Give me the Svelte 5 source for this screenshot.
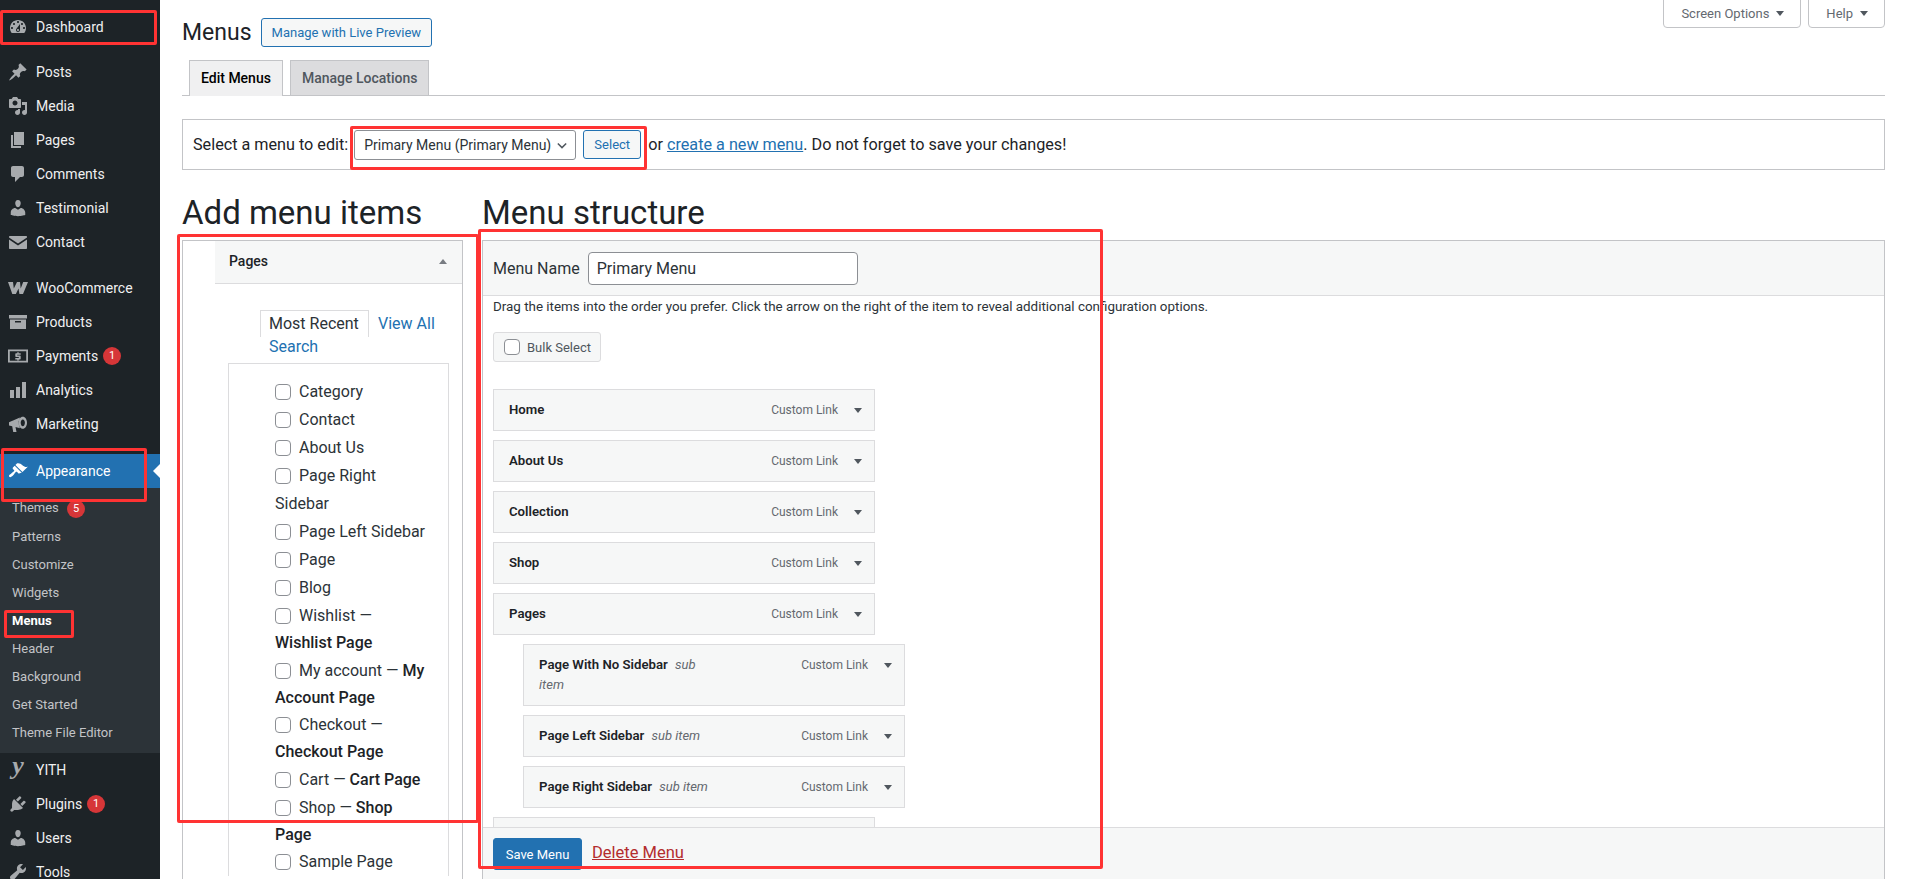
<script>
  const icons = {
    dashboard: "M3.76 16h12.48c1.1-1.37 1.76-3.11 1.76-5 0-4.42-3.58-8-8-8s-8 3.58-8 8c0 1.89.66 3.63 1.76 5zM10 4c.55 0 1 .45 1 1s-.45 1-1 1-1-.45-1-1 .45-1 1-1zM6 6c.55 0 1 .45 1 1s-.45 1-1 1-1-.45-1-1 .45-1 1-1zm8 0c.55 0 1 .45 1 1s-.45 1-1 1-1-.45-1-1 .45-1 1-1zm-5.37 5.55L12 7v6c0 1.1-.9 2-2 2s-2-.9-2-2c0-.57.24-1.08.63-1.45zM4 10c.55 0 1 .45 1 1s-.45 1-1 1-1-.45-1-1 .45-1 1-1zm12 0c.55 0 1 .45 1 1s-.45 1-1 1-1-.45-1-1 .45-1 1-1zm-5 3c0-.55-.45-1-1-1s-1 .45-1 1 .45 1 1 1 1-.45 1-1z",
    post: "M10.44 3.02l1.82-1.82 6.36 6.35-1.83 1.82c-1.05-.68-2.48-.57-3.41.36l-.75.75c-.92.93-1.04 2.35-.35 3.41l-1.83 1.82-2.41-2.41-2.8 2.79c-.42.42-3.38 2.71-3.8 2.29s1.86-3.39 2.28-3.81l2.79-2.79L4.1 9.36l1.83-1.82c1.05.69 2.48.57 3.4-.36l.75-.75c.93-.92 1.05-2.35.36-3.41z",
    media: "M13 11V4c0-.55-.45-1-1-1h-1.67L9 1H5L3.67 3H2c-.55 0-1 .45-1 1v7c0 .55.45 1 1 1h10c.55 0 1-.45 1-1zM7 4.5c1.38 0 2.5 1.12 2.5 2.5S8.38 9.5 7 9.5 4.5 8.38 4.5 7 5.62 4.5 7 4.5zM14 6h5v10.5c0 1.38-1.12 2.5-2.5 2.5S14 17.88 14 16.5s1.12-2.5 2.5-2.5c.17 0 .34.02.5.05V9h-3V6zm-4 8.05V13h2v3.5c0 1.38-1.12 2.5-2.5 2.5S7 17.88 7 16.5 8.12 14 9.5 14c.17 0 .34.02.5.05z",
    page: "M6 15V2h10v13H6zm-1 1h8v2H3V5h2v11z",
    comments: "M5 2h9c1.1 0 2 .9 2 2v7c0 1.1-.9 2-2 2h-2l-5 5v-5H5c-1.1 0-2-.9-2-2V4c0-1.1.9-2 2-2z",
    users: "M10 9.25c-2.27 0-2.73-3.44-2.73-3.44C7 4.02 7.82 2 9.97 2c2.16 0 2.98 2.02 2.71 3.81 0 0-.41 3.44-2.68 3.44zm0 2.57L12.72 10c2.39 0 4.52 2.33 4.52 4.53v2.49s-3.65 1.13-7.24 1.13c-3.65 0-7.24-1.13-7.24-1.13v-2.49c0-2.25 1.94-4.48 4.47-4.48z",
    email: "M2 4h16c.6 0 1 .4 1 1v.5l-9 6-9-6V5c0-.6.4-1 1-1zM1 7.6l9 6 9-6V16c0 .6-.4 1-1 1H2c-.6 0-1-.4-1-1z",
    woo: "M0 4h5l.8 6.5L9 4h3l.7 6.5L15.2 4H20l-5 12h-3.6l-.9-5.5-2.6 5.5H4.3z",
    products: "M1 3h18v3.5H1zM2 7.5h16V17H2zM7 9v1.6h6V9z",
    payments: "M0 3.5h20v13H0zM1.8 5.3v9.4h16.4V5.3zM9.3 6.2h1.4v1h2v1.5H9.2v.8h2.5c.6 0 1 .4 1 1v1.9c0 .6-.4 1-1 1h-1v1H9.3v-1h-2v-1.5h3.5v-.9H8.3c-.6 0-1-.4-1-1V8.2c0-.6.4-1 1-1h1z",
    chart: "M18 18V2h-4v16h4zm-6 0V7H8v11h4zm-6 0v-8H2v8h4z",
    megaphone: "M1 8.2L12 3.4c-1.7 3.2-1.7 7.6 0 10.8l-4.5-1.2 1 5H5.200l-1-5.800L1 11.400zM14.800 2.800c2.400 0 4.200 2.700 4.200 6s-1.800 6-4.200 6-4.200-2.700-4.200-6 1.800-6 4.200-6zM14.800 5.400c-1.200 0-2.100 1.500-2.100 3.400s.9 3.400 2.100 3.400 2.100-1.500 2.100-3.400-.9-3.400-2.100-3.400z",
    brush: "M14.48 11.06L7.41 3.99l1.5-1.5c.5-.56 2.3-.47 3.51.32 1.21.8 1.43 1.28 2.91 2.1 1.18.64 2.45 1.26 4.45.85zm-.71.71L6.7 4.7 4.93 6.47c-.39.39-.39 1.02 0 1.41l1.06 1.06c.39.39.39 1.03 0 1.42-.6.6-1.43 1.11-2.21 1.69-.35.26-.7.53-1.01.84C1.43 13.23.4 14.89 1.3 15.8c.9.9 2.56-.13 3.91-1.47.31-.31.58-.66.85-1.01.57-.78 1.08-1.61 1.69-2.21.39-.39 1.02-.39 1.41 0l1.06 1.06c.39.39 1.02.39 1.41 0z",
    plugin: "M13.11 4.36L9.87 7.6 8 5.73l3.24-3.24c.35-.34 1.05-.2 1.56.32.52.51.66 1.21.31 1.55zm-8 1.77l.91-1.12 9.01 9.01-1.19.84c-.71.71-2.63 1.16-3.82 1.16H6.14L4.9 17.26c-.59.59-1.54.59-2.12 0-.59-.58-.59-1.53 0-2.12l1.24-1.24v-3.88c0-1.13.4-3.19 1.09-3.89zm7.26 3.97l3.24-3.24c.34-.35 1.04-.21 1.55.31.52.51.66 1.21.31 1.55l-3.24 3.25z",
    tools: "M16.68 9.77c-1.34 1.34-3.3 1.67-4.95.99l-5.41 6.52c-.99.99-2.59.99-3.58 0s-.99-2.59 0-3.57l6.52-5.42c-.68-1.65-.35-3.61.99-4.95 1.28-1.28 3.12-1.62 4.72-1.06l-2.89 2.89 2.82 2.82 2.86-2.87c.53 1.58.18 3.39-1.08 4.65z"
  };

  const topItems = [
    { label: "Posts", icon: "post" },
    { label: "Media", icon: "media" },
    { label: "Pages", icon: "page" },
    { label: "Comments", icon: "comments" },
    { label: "Testimonial", icon: "users" },
    { label: "Contact", icon: "email" }
  ];
  const shopItems = [
    { label: "WooCommerce", icon: "woo" },
    { label: "Products", icon: "products" },
    { label: "Payments", icon: "payments", badge: 1 },
    { label: "Analytics", icon: "chart" },
    { label: "Marketing", icon: "megaphone" }
  ];
  const subItems = [
    { label: "Themes", badge: 5 },
    { label: "Patterns" },
    { label: "Customize" },
    { label: "Widgets" },
    { label: "Menus", current: true },
    { label: "Header" },
    { label: "Background" },
    { label: "Get Started" },
    { label: "Theme File Editor" }
  ];
  const lastItems = [
    { label: "YITH", icon: "yith" },
    { label: "Plugins", icon: "plugin", badge: 1 },
    { label: "Users", icon: "users" },
    { label: "Tools", icon: "tools" }
  ];

  // each row is one wrapped line, the first has the checkbox
  const pages = [
    [["Category"]],
    [["Contact"]],
    [["About Us"]],
    [["Page Right"], ["Sidebar"]],
    [["Page Left Sidebar"]],
    [["Page"]],
    [["Blog"]],
    [["Wishlist —"], ["", "Wishlist Page"]],
    [["My account — ", "My"], ["", "Account Page"]],
    [["Checkout —"], ["", "Checkout Page"]],
    [["Cart — ", "Cart Page"]],
    [["Shop — ", "Shop"], ["", "Page"]],
    [["Sample Page"]]
  ];

  const menuItems = [
    { title: "Home" },
    { title: "About Us" },
    { title: "Collection" },
    { title: "Shop" },
    { title: "Pages" },
    { title: "Page With No Sidebar", sub: true },
    { title: "Page Left Sidebar", sub: true },
    { title: "Page Right Sidebar", sub: true },
    { title: "Blog" }
  ];

  // red annotation boxes drawn on the screenshot: x, y, w, h
  const marks = [
    [0, 10, 157, 35],
    [1, 448, 146, 54],
    [4, 610, 70, 28],
    [350, 126, 297, 44],
    [177, 234, 302, 589],
    [478, 229, 625, 640]
  ];
</script>

{#snippet navRow(item)}
  <li class="nav-row">
    <span class="nav-icon">
      {#if item.icon === "yith"}
        <svg viewBox="0 0 20 20" width="20" height="20"><text x="10" y="14" text-anchor="middle" class="yith">y</text></svg>
      {:else}
        <svg viewBox="0 0 20 20" width="20" height="20"><path fill-rule="evenodd" d={icons[item.icon]} /></svg>
      {/if}
    </span>
    <span>{item.label}</span>
    {#if item.badge}<span class="badge">{item.badge}</span>{/if}
  </li>
{/snippet}

<div class="shell">
  <nav class="sidebar">
    <ul>
      {@render navRow({ label: "Dashboard", icon: "dashboard" })}
    </ul>
    <ul class="sep">
      {#each topItems as item}{@render navRow(item)}{/each}
    </ul>
    <ul class="sep wide">
      {#each shopItems as item}{@render navRow(item)}{/each}
    </ul>
    <ul class="sep wide">
      <li class="nav-row current-top">
        <span class="nav-icon"><svg viewBox="0 0 20 20" width="20" height="20"><path d={icons.brush} /></svg></span>
        <span>Appearance</span>
      </li>
    </ul>
    <ul class="submenu">
      {#each subItems as item}
        <li class:current={item.current}>
          {item.label}
          {#if item.badge}<span class="badge">{item.badge}</span>{/if}
        </li>
      {/each}
    </ul>
    <ul>
      {#each lastItems as item}{@render navRow(item)}{/each}
    </ul>
  </nav>

  <main class="content">
    <div class="top">
      <div class="title-row">
        <h1>Menus</h1>
        <button class="outline">Manage with Live Preview</button>
      </div>
      <div class="screen-meta">
        <span class="meta-link">Screen Options <i class="tri down"></i></span>
        <span class="meta-link">Help <i class="tri down"></i></span>
      </div>
    </div>

    <div class="tabs">
      <span class="tab active">Edit Menus</span>
      <span class="tab">Manage Locations</span>
    </div>

    <div class="select-bar">
      <span>Select a menu to edit:</span>
      <span class="select-wrap">
        <select><option>Primary Menu (Primary Menu)</option></select>
        <svg class="chevron" viewBox="0 0 12 8" width="10" height="7"><path d="M1 1.5l5 5 5-5" fill="none" stroke="#50575e" stroke-width="1.8" /></svg>
      </span>
      <button class="outline small">Select</button>
      <span class="tail">or <a href="#new">create a new menu</a>. Do not forget to save your changes!</span>
    </div>

    <div class="columns">
      <section class="col-left">
        <h2>Add menu items</h2>
        <div class="box">
          <div class="acc-head">
            <span>Pages</span>
            <i class="tri up"></i>
          </div>
          <div class="page-tabs">
            <span class="page-tab open">Most Recent</span>
            <span class="page-tab">View All</span>
            <span class="page-tab search">Search</span>
          </div>
          <div class="panel">
            {#each pages as lines}
              {#each lines as line, i}
                <div class="check-line" class:tight={lines[1]?.[1]}>
                  {#if i === 0}<input type="checkbox" />{/if}{line[0]}{#if line[1]}<strong>{line[1]}</strong>{/if}
                </div>
              {/each}
            {/each}
          </div>
        </div>
      </section>

      <section class="col-right">
        <h2>Menu structure</h2>
        <div class="box menu-box">
          <div class="name-row">
            <label for="menu-name">Menu Name</label>
            <input id="menu-name" type="text" value="Primary Menu" />
          </div>
          <div class="menu-body">
            <p class="hint">Drag the items into the order you prefer. Click the arrow on the right of the item to reveal additional configuration options.</p>
            <label class="bulk"><input type="checkbox" /> Bulk Select</label>
            <div class="items">
              {#each menuItems as item}
                <div class="item" class:sub={item.sub}>
                  <div class="item-title">
                    <strong>{item.title}</strong>
                    {#if item.sub}<em>sub item</em>{/if}
                  </div>
                  <span class="item-type">Custom Link</span>
                  <i class="tri down"></i>
                </div>
              {/each}
            </div>
          </div>
          <div class="menu-foot">
            <button class="primary">Save Menu</button>
            <a class="delete" href="#delete">Delete Menu</a>
          </div>
        </div>
      </section>
    </div>
  </main>

  {#each marks as m}
    <div class="mark" style="left:{m[0]}px;top:{m[1]}px;width:{m[2]}px;height:{m[3]}px"></div>
  {/each}
</div>

<style>
  :global(body) {
    background: #fff;
    color: #1d2327;
    font-family: Roboto, "Liberation Sans", sans-serif;
    font-size: 14px;
  }
  .shell {
    position: relative;
    display: flex;
    height: 879px;
    overflow: hidden;
  }
  ul {
    list-style: none;
    margin: 0;
    padding: 0;
  }

  /* sidebar */
  .sidebar {
    flex: 0 0 160px;
    box-sizing: border-box;
    padding-top: 10px;
    background: #1d2327;
    color: #f0f0f1;
  }
  .sep {
    margin-top: 11px;
  }
  .sep.wide {
    margin-top: 12px;
  }
  .sep.wide:nth-child(4) {
    margin-top: 13px;
  }
  .nav-row {
    position: relative;
    display: flex;
    align-items: center;
    height: 34px;
    padding-left: 8px;
  }
  .nav-icon {
    display: flex;
    width: 28px;
    fill: #a7aaad;
  }
  .yith {
    font: italic 700 26px "Liberation Serif", serif;
  }
  .badge {
    display: inline-block;
    box-sizing: border-box;
    width: 18px;
    height: 18px;
    margin-left: 5px;
    border-radius: 50%;
    background: #d63638;
    color: #fff;
    font-size: 11px;
    line-height: 18px;
    text-align: center;
  }
  .current-top {
    background: #2271b1;
    color: #fff;
  }
  .current-top .nav-icon {
    fill: #fff;
  }
  .current-top::after {
    content: "";
    position: absolute;
    right: 0;
    top: 10px;
    border: 7px solid transparent;
    border-right-color: #fff;
    border-left-width: 0;
  }
  .submenu {
    padding: 6px 0 6px;
    background: #2c3338;
    color: #c3c4c7;
    font-size: 13px;
  }
  .submenu li {
    height: 28px;
    padding-left: 12px;
    line-height: 27px;
  }
  .submenu li:first-child {
    height: 29px;
  }
  .submenu .current {
    color: #fff;
    font-weight: 700;
  }

  /* page */
  .content {
    flex: 1;
    min-width: 0;
    display: flex;
    flex-direction: column;
    padding: 0 21px 0 22px;
  }
  .top {
    display: flex;
    justify-content: space-between;
    height: 60px;
  }
  .title-row {
    display: flex;
    align-items: center;
    gap: 9px;
    height: 29px;
    margin-top: 18px;
  }
  h1 {
    margin: 0;
    font-size: 23px;
    font-weight: 400;
  }
  button {
    font: inherit;
  }
  .outline {
    height: 29px;
    padding: 0 10px;
    border: 1px solid #2271b1;
    border-radius: 3px;
    background: #f6f7f7;
    color: #2271b1;
    font-size: 13px;
  }
  .screen-meta {
    display: flex;
    gap: 7px;
    height: 29px;
    margin-top: -1px;
  }
  .meta-link {
    display: flex;
    align-items: center;
    padding: 0 16px 0 17px;
    border: 1px solid #c3c4c7;
    border-radius: 0 0 4px 4px;
    color: #646970;
    font-size: 13px;
  }
  .tri {
    display: inline-block;
    width: 0;
    height: 0;
    border-left: 4px solid transparent;
    border-right: 4px solid transparent;
  }
  .tri.down {
    border-top: 5px solid #50575e;
  }
  .tri.up {
    border-bottom: 5px solid #787c82;
  }
  .meta-link .tri {
    margin-left: 7px;
  }
  .tabs {
    display: flex;
    gap: 7px;
    height: 35px;
    padding-left: 7px;
    border-bottom: 1px solid #c3c4c7;
  }
  .tab {
    height: 34px;
    padding: 0 11px;
    border: 1px solid #c3c4c7;
    border-bottom: 0;
    background: #dcdcde;
    color: #50575e;
    font-weight: 500;
    line-height: 34px;
  }
  .tab.active {
    height: 35px;
    background: #f0f0f1;
    color: #000;
  }
  .select-bar {
    display: flex;
    align-items: center;
    gap: 6px;
    height: 49px;
    margin-top: 23px;
    padding: 0 10px;
    border: 1px solid #c3c4c7;
    font-size: 16.2px;
  }
  a {
    color: #2271b1;
  }
  .select-wrap {
    position: relative;
    display: flex;
  }
  select {
    appearance: none;
    width: 222px;
    height: 30px;
    padding: 0 24px 0 9px;
    border: 1px solid #8c8f94;
    border-radius: 3px;
    background: #fff;
    color: #2c3338;
    font: 14px Roboto, sans-serif;
  }
  .chevron {
    position: absolute;
    right: 9px;
    top: 12px;
  }
  .small {
    width: 58px;
    padding: 0;
    margin-left: 1px;
  }
  .tail {
    margin-left: 1px;
  }

  .columns {
    flex: 1;
    min-height: 0;
    display: flex;
    gap: 19px;
  }
  h2 {
    margin: 0;
    height: 70px;
    padding-top: 22px;
    box-sizing: border-box;
    font-size: 33px;
    font-weight: 400;
    line-height: 42px;
    white-space: nowrap;
  }
  .col-left {
    flex: 0 0 281px;
    display: flex;
    flex-direction: column;
  }
  .col-right {
    flex: 1;
    min-width: 0;
    display: flex;
    flex-direction: column;
  }
  .box {
    flex: 1;
    min-height: 0;
    overflow: hidden;
    border: 1px solid #c3c4c7;
    border-bottom: 0;
  }
  .acc-head {
    display: flex;
    align-items: center;
    justify-content: space-between;
    box-sizing: border-box;
    height: 43px;
    margin-left: 32px;
    padding: 0 15px 2px 14px;
    border-bottom: 1px solid #dcdcde;
    background: #f6f7f7;
    font-weight: 500;
  }
  .page-tabs {
    display: flex;
    flex-wrap: wrap;
    margin: 26px 13px 0 77px;
    font-size: 16px;
    color: #2271b1;
  }
  .page-tab {
    height: 27px;
    padding: 0 9px;
    line-height: 27px;
    white-space: nowrap;
  }
  .page-tab.open {
    box-sizing: border-box;
    width: 109px;
    padding: 0 0 0 8px;
    border: 1px solid #dcdcde;
    border-bottom: 0;
    color: #2c3338;
    line-height: 25px;
  }
  .page-tab.search {
    height: 26px;
    line-height: 20px;
  }
  .panel {
    margin: 0 13px 0 45px;
    padding: 14px 0 0 46px;
    border: 1px solid #dcdcde;
    border-bottom: 0;
    color: #2c3338;
    font-size: 16px;
  }
  .check-line {
    height: 28px;
    line-height: 28px;
    white-space: pre;
  }
  .check-line.tight {
    height: 27.25px;
    line-height: 27.25px;
  }
  .check-line strong {
    color: #1d2327;
    font-weight: 500;
  }
  input[type="checkbox"] {
    appearance: none;
    width: 16px;
    height: 16px;
    margin: 0 8px 0 0;
    border: 1px solid #8c8f94;
    border-radius: 4px;
    background: #fff;
    vertical-align: -3px;
  }

  .menu-box {
    display: flex;
    flex-direction: column;
  }
  .name-row {
    flex: none;
    display: flex;
    align-items: center;
    gap: 8px;
    height: 54px;
    padding-left: 10px;
    border-bottom: 1px solid #dcdcde;
    background: #f6f7f7;
    font-size: 16px;
    color: #2c3338;
  }
  input[type="text"] {
    box-sizing: border-box;
    width: 270px;
    height: 33px;
    padding: 0 8px;
    border: 1px solid #8c8f94;
    border-radius: 4px;
    color: #2c3338;
    font: 16px Roboto, sans-serif;
  }
  .menu-body {
    flex: 1;
    min-height: 0;
    overflow: hidden;
    padding: 0 10px;
  }
  .hint {
    margin: 1px 0 0;
    font-size: 13.4px;
    line-height: 20px;
    color: #2c3338;
  }
  .bulk {
    display: inline-flex;
    align-items: center;
    box-sizing: border-box;
    width: 108px;
    height: 30px;
    margin-top: 15px;
    padding-left: 10px;
    border: 1px solid #dcdcde;
    border-radius: 3px;
    background: #f6f7f7;
    color: #50575e;
    font-size: 13px;
  }
  .bulk input {
    margin-right: 7px;
  }
  .items {
    display: flex;
    flex-direction: column;
    gap: 9px;
    margin-top: 27px;
  }
  .item {
    display: flex;
    align-items: flex-start;
    box-sizing: border-box;
    width: 382px;
    padding: 10px 10px 10px 15px;
    border: 1px solid #dcdcde;
    background: #f6f7f7;
    font-size: 13px;
    line-height: 20px;
  }
  .item.sub {
    margin-left: 30px;
  }
  .item-title {
    flex: 1;
    max-width: 170px;
  }
  .item-title strong {
    font-weight: 600;
    font-size: 13.2px;
  }
  .item-title em {
    margin-left: 4px;
    color: #646970;
  }
  .item-type {
    margin-left: auto;
    color: #646970;
    font-size: 12px;
  }
  .item .tri {
    margin: 8px 2px 0 16px;
  }
  .menu-foot {
    flex: none;
    display: flex;
    align-items: flex-start;
    gap: 10px;
    box-sizing: border-box;
    height: 52px;
    padding: 10px 0 0 10px;
    border-top: 1px solid #dcdcde;
    background: #f6f7f7;
  }
  .primary {
    width: 89px;
    height: 32px;
    border: 1px solid #2271b1;
    border-radius: 3px;
    background: #2271b1;
    color: #fff;
    font-size: 13px;
  }
  .delete {
    color: #b32d2e;
    font-size: 16.5px;
    line-height: 30px;
  }

  .mark {
    position: absolute;
    box-sizing: border-box;
    border: 3px solid #f33;
    border-radius: 2px;
    pointer-events: none;
  }
</style>
